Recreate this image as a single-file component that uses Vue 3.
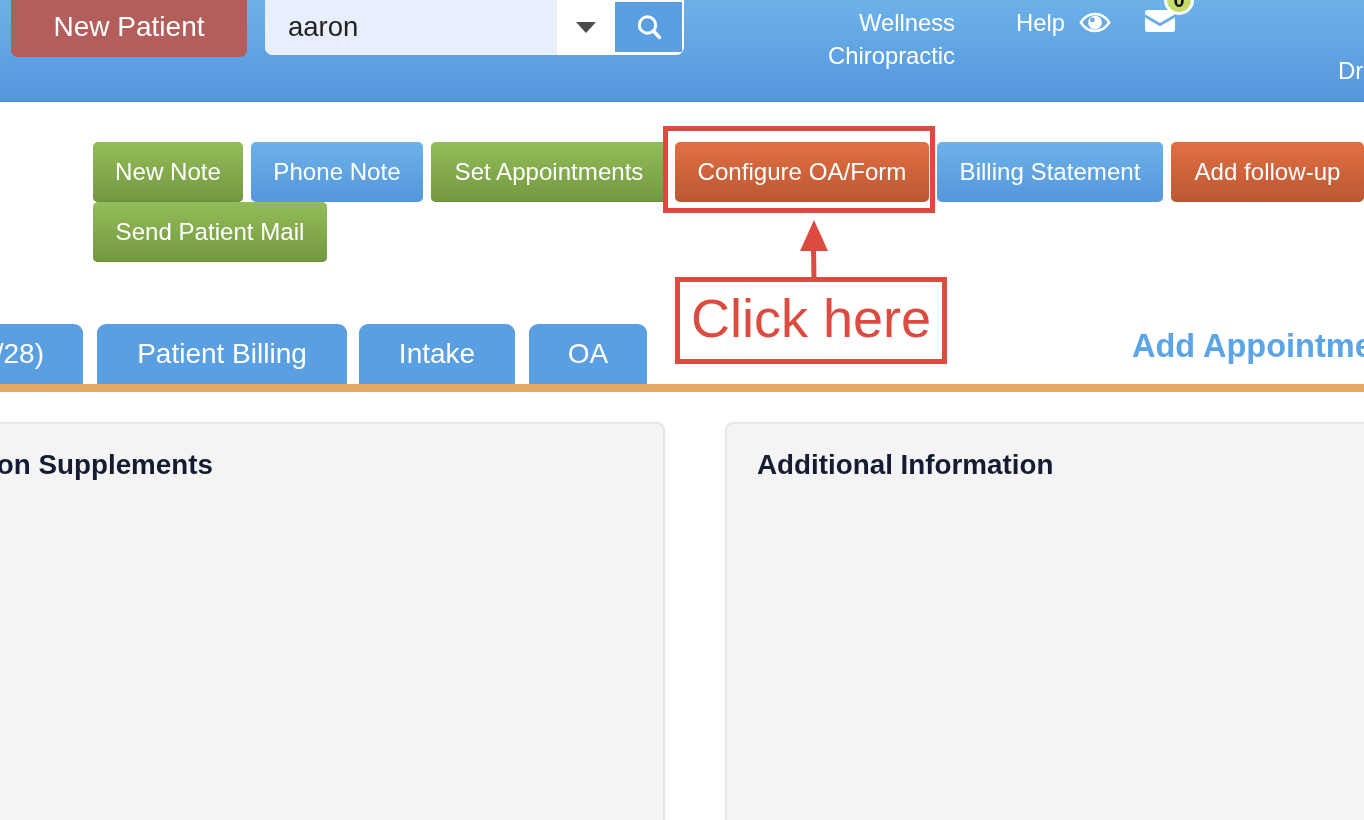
<template>
  <div class="page">
    <header class="topbar">
      <button class="new-patient">New Patient</button>
      <div class="search">
        <div class="search-value">aaron</div>
        <div class="search-caret"></div>
        <button class="search-btn">
          <svg viewBox="0 0 26 26" width="26" height="26">
            <circle cx="11.500" cy="11" r="8.200" fill="none" stroke="#fff" stroke-width="3" />
            <path d="M17.500 17l6 6.500" fill="none" stroke="#fff" stroke-width="3.400" stroke-linecap="round" />
          </svg>
        </button>
      </div>
      <div class="clinic">Wellness<br />Chiropractic</div>
      <div class="help">Help</div>
      <svg class="eye" viewBox="0 0 30 20" width="32" height="21">
        <path d="M1.500 10C5 4.500 9.500 2 15 2s10 2.500 13.500 8C25 15.500 20.500 18 15 18S5 15.500 1.500 10z" fill="none" stroke="#fff" stroke-width="2.400" />
        <circle cx="15" cy="10" r="6.500" fill="#fff" />
        <circle cx="12.500" cy="7.500" r="2.200" fill="#6aa9e4" />
      </svg>
      <div class="mail">
        <svg viewBox="0 0 30 22" width="30" height="22">
          <path d="M2.500 0h25A2.500 2.500 0 0 1 30 2.500v1.700L15 13 0 4.200V2.500A2.500 2.500 0 0 1 2.500 0z" fill="#fff" />
          <path d="M0 7.500l15 8.700 15-8.700V19.500a2.500 2.500 0 0 1-2.500 2.500h-25A2.500 2.500 0 0 1 0 19.500z" fill="#fff" />
        </svg>
        <span class="badge">0</span>
      </div>
      <div class="user">Dr</div>
    </header>

    <section class="actions">
      <button v-for="a in actions" :key="a.label" class="action" :class="a.tone">{{ a.label }}</button>
    </section>

    <section class="tabs-row">
      <div class="tabs">
        <div class="tab tab-first">/28)</div>
        <div class="tab tab-billing">Patient Billing</div>
        <div class="tab tab-intake">Intake</div>
        <div class="tab tab-oa">OA</div>
      </div>
      <a class="add-link">Add Appointment</a>
    </section>

    <section class="panels">
      <div class="panel panel-left"><h3>on Supplements</h3></div>
      <div class="panel panel-right"><h3>Additional Information</h3></div>
    </section>

    <div class="mark-box"></div>
    <svg class="mark-arrow" viewBox="0 0 32 62" width="32" height="62">
      <path d="M16 0L30 31H2z" fill="#dd4b40" />
      <path d="M15.500 28l.5 32" stroke="#dd4b40" stroke-width="5" fill="none" />
    </svg>
    <div class="mark-label">Click here</div>
  </div>
</template>

<script setup>
const actions = [
  { label: 'New Note', tone: 'green' },
  { label: 'Phone Note', tone: 'blue' },
  { label: 'Set Appointments', tone: 'green' },
  { label: 'Configure OA/Form', tone: 'orange' },
  { label: 'Billing Statement', tone: 'blue' },
  { label: 'Add follow-up', tone: 'orange' },
  { label: 'Send Patient Mail', tone: 'green' }
]
</script>

<style>
html, body {
  margin: 0;
  overflow: hidden;
  background: #fff;
}
</style>

<style scoped>
.page {
  position: relative;
  width: 1364px;
  height: 820px;
  overflow: hidden;
  background: #fff;
  font-family: "Liberation Sans", Arial, sans-serif;
  color: #fff;
  filter: blur(0.5px);
}

button {
  font-family: inherit;
  border: 0;
  margin: 0;
  padding: 0;
  color: #fff;
}

.topbar {
  display: flex;
  align-items: flex-start;
  height: 102px;
  box-sizing: border-box;
  border-bottom: 2px solid #4f8fd6;
  background: linear-gradient(#6cb2e8, #5596dd);
  padding-left: 11px;
  white-space: nowrap;
}

.new-patient {
  width: 236px;
  height: 57px;
  padding-bottom: 4px;
  background: #b35e5b;
  border-radius: 0 0 7px 7px;
  font-size: 28px;
}

.search {
  display: flex;
  width: 419px;
  height: 55px;
  margin-left: 18px;
  background: #fff;
  border-radius: 0 0 8px 8px;
  overflow: hidden;
}

.search-value {
  width: 269px;
  height: 55px;
  padding-left: 23px;
  background: #e8effc;
  color: #222;
  font-size: 27.500px;
  line-height: 53px;
}

.search-caret {
  width: 0;
  height: 0;
  margin: 22px 0 0 19px;
  border-left: 10px solid transparent;
  border-right: 10px solid transparent;
  border-top: 11px solid #4d4d4d;
}

.search-btn {
  display: flex;
  align-items: center;
  justify-content: center;
  width: 67px;
  height: 50px;
  margin: 2px 0 0 19px;
  background: #5a9fe2;
}

.clinic {
  width: 140px;
  margin: 5.500px 0 0 131px;
  text-align: right;
  font-size: 23.800px;
  line-height: 33px;
}

.help {
  margin: 5.500px 0 0 61px;
  font-size: 23.800px;
  line-height: 33px;
}

.eye {
  margin: 12px 0 0 14px;
}

.mail {
  position: relative;
  margin: 10px 0 0 34px;
  height: 22px;
}

.badge {
  position: absolute;
  left: 19px;
  top: -25px;
  width: 24px;
  height: 24px;
  border: 3px solid #fff;
  border-radius: 50%;
  background: #c5dc6a;
  color: #111;
  font-size: 20px;
  font-weight: 700;
  line-height: 24px;
  text-align: center;
}

.user {
  margin: 54px 0 0 163px;
  font-size: 24px;
  line-height: 33px;
}

.actions {
  display: flex;
  flex-wrap: wrap;
  gap: 0 8px;
  width: 1300px;
  margin: 40px 0 0 93px;
}

.action {
  height: 60px;
  border-radius: 5px;
  font-size: 24.100px;
  white-space: nowrap;
}

.action:nth-child(1) { width: 150px; }
.action:nth-child(2) { width: 172px; }
.action:nth-child(3) { width: 236px; }
.action:nth-child(4) { width: 254px; }
.action:nth-child(5) { width: 226px; }
.action:nth-child(6) { width: 193px; }
.action:nth-child(7) { width: 234px; }

.green {
  background: linear-gradient(#93bd58, #729840);
  box-shadow: inset 0 -1px 0 #68903a;
}

.blue {
  background: linear-gradient(#6cb2e8, #5596dd);
}

.orange {
  background: linear-gradient(#e36f42, #b95733);
}

.tabs-row {
  display: flex;
  justify-content: space-between;
  align-items: flex-start;
  height: 60px;
  margin-top: 62px;
  border-bottom: 8px solid #e8a965;
  overflow: hidden;
  white-space: nowrap;
}

.tabs {
  display: flex;
}

.tab {
  display: flex;
  align-items: center;
  justify-content: center;
  height: 60px;
  background: #5a9fe2;
  border-radius: 9px 9px 0 0;
  font-size: 28px;
}

.tab-first {
  justify-content: flex-end;
  width: 123px;
  margin-left: -40px;
  padding-right: 39px;
  box-sizing: border-box;
}

.tab-billing {
  width: 250px;
  margin-left: 14px;
}

.tab-intake {
  width: 156px;
  margin-left: 12px;
}

.tab-oa {
  width: 118px;
  margin-left: 14px;
}

.add-link {
  width: 232px;
  color: #5ba4e6;
  font-size: 32.500px;
  font-weight: 700;
  line-height: 44px;
}

.panels {
  display: flex;
  gap: 60px;
  height: 420px;
  margin: 30px -40px 0 -40px;
}

.panel {
  box-sizing: border-box;
  background: #f4f4f4;
  border: 2px solid #e7e7e7;
  border-radius: 8px;
  padding: 22px 30px;
}

.panel-left {
  width: 705px;
  text-align: right;
  padding-right: 450px;
}

.panel-right {
  flex: 1;
}

.panel h3 {
  margin: 0;
  color: #141c33;
  font-size: 27.800px;
  line-height: 38px;
  white-space: nowrap;
}

.mark-box {
  position: absolute;
  left: 663px;
  top: 126px;
  width: 272px;
  height: 87px;
  box-sizing: border-box;
  border: 5px solid #dd4b40;
}

.mark-arrow {
  position: absolute;
  left: 798px;
  top: 220px;
}

.mark-label {
  position: absolute;
  left: 675px;
  top: 277px;
  width: 272px;
  height: 87px;
  box-sizing: border-box;
  border: 5px solid #dd4b40;
  background: #fff;
  color: #dd4b40;
  font-size: 54px;
  line-height: 72px;
  text-align: center;
}
</style>
